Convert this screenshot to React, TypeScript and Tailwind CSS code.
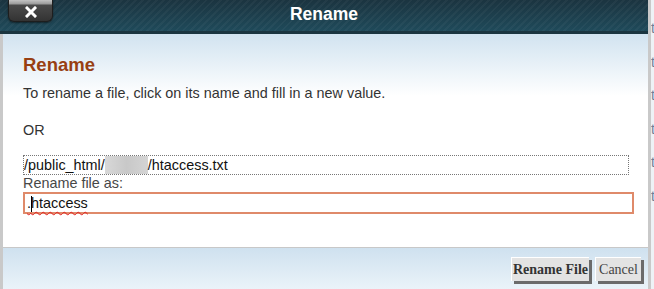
export default function App() {
  return (
    <div className="flex h-[289px] w-[654px] overflow-hidden bg-[#eef2f6] font-['Liberation_Sans',Arial,sans-serif]">
      <div className="flex w-[651px] shrink-0 flex-col border-r-[3px] border-[#c9c9c9]">
        {/* title bar */}
        <header className="relative flex h-[34px] shrink-0 items-center justify-center border-b-[3px] border-[#1a3540] bg-[repeating-linear-gradient(135deg,rgba(255,255,255,0.035)_0_2px,transparent_2px_5px),linear-gradient(#1b3440,#1f4a5a)]">
          <button className="absolute left-[8px] top-0 flex h-[22px] w-[45px] items-center justify-center rounded-b-[6px] border border-t-0 border-[#1e1e1e] bg-[linear-gradient(#c4c4c4_0,#9a9a9a_4px,#4a4a4a_5px,#333_100%)] shadow-[0_1px_2px_rgba(0,0,0,0.5)]">
            <svg width="12" height="12" viewBox="0 0 12 12" className="mt-[3px]">
              <path d="M2 2 L10 10 M10 2 L2 10" stroke="#fff" strokeWidth="3" strokeLinecap="square" />
            </svg>
          </button>
          <h1 className="mt-[-2px] text-[17.5px] font-bold text-white">Rename</h1>
        </header>

        <div className="flex flex-1 flex-col border-l-[3px] border-[#c9c9c9]">
          {/* body */}
          <div className="h-[214px] shrink-0 border-b border-[#c8c8c8] bg-[linear-gradient(#d1e3f0,#ffffff_62px)] pl-[20px] pt-[20px]">
            <h2 className="text-[18.5px] font-bold leading-[22px] text-[#983f12]">Rename</h2>
            <p className="mt-[8px] text-[14.4px] leading-[18px] text-[#333]">
              To rename a file, click on its name and fill in a new value.
            </p>
            <p className="mt-[19px] text-[14.4px] leading-[18px] text-[#333]">OR</p>
            <div className="mt-[16px] flex h-[20px] w-[606px] items-center border border-dotted border-[#777] text-[14.4px] leading-[18px] text-[#111]">
              <span>/public_html/</span>
              <span className="h-[18px] w-[43px] bg-[linear-gradient(90deg,#d8d8d8,#c8c8c8,#d4d4d4)]" />
              <span>/htaccess.txt</span>
            </div>
            <p className="text-[14.4px] leading-[16px] text-[#474747]">Rename file as:</p>
            <div className="mt-[1px] flex h-[22px] w-[611px] items-center border-2 border-[#df8a6a] pl-[2px] text-[14.4px] leading-[18px] text-[#111]">
              <span className="underline decoration-[#e02020] decoration-wavy decoration-1 underline-offset-[3px]">
                .<span className="relative">
                  <span className="absolute left-0 top-[1px] h-[16px] w-px bg-black" />
                  htaccess
                </span>
              </span>
            </div>
          </div>

          {/* footer */}
          <div className="flex flex-1 items-start justify-end gap-[6px] bg-[linear-gradient(#cfe1ef,#eaf3f9)] pr-[7px] pt-[9px] font-['Liberation_Serif',serif] text-[14px]">
            <button className="h-[24px] w-[78px] border-l border-t border-white bg-[#e3e3e3] font-bold text-[#333] shadow-[3px_3px_0_#6b6b6b]">
              Rename File
            </button>
            <button className="h-[24px] w-[46px] border-l border-t border-white bg-[#e3e3e3] text-[#444] shadow-[3px_3px_0_#6b6b6b]">
              Cancel
            </button>
          </div>
        </div>
      </div>

      {/* page behind the dialog, cut off by the window edge */}
      <div className="flex flex-col overflow-hidden pt-[12px] text-[14px] leading-[33.5px] text-[#6d7f99]">
        <span>t</span>
        <span>t</span>
        <span>t</span>
        <span>t</span>
        <span>t</span>
        <span>t</span>
      </div>
    </div>
  );
}
